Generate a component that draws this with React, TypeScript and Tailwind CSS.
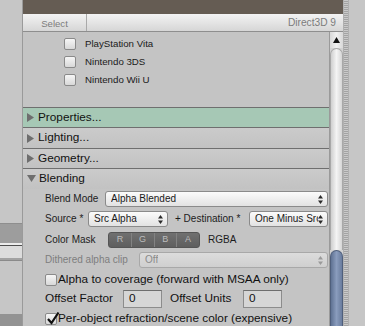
import React from "react";

const Arrows = ({ color = "#2a2a2a" }: { color?: string }) => (
  <svg width="5" height="9" viewBox="0 0 5 9" className="shrink-0">
    <polygon points="2.5,0 5,3.5 0,3.5" fill={color} />
    <polygon points="0,5.5 5,5.5 2.5,9" fill={color} />
  </svg>
);

const TriRight = () => (
  <svg width="8" height="9" viewBox="0 0 8 9" className="shrink-0">
    <polygon points="0,0 7,4.5 0,9" fill="#6e6e6e" />
  </svg>
);
const TriDown = () => (
  <svg width="9" height="8" viewBox="0 0 9 8" className="shrink-0">
    <polygon points="0,0 9,0 4.5,7" fill="#6e6e6e" />
  </svg>
);

const Box = ({ checked = false }: { checked?: boolean }) => (
  <div className="relative w-[12px] h-[12px] shrink-0 rounded-[2px] border border-[#8a8a8a] bg-gradient-to-b from-[#f6f6f6] to-[#d8d8d8]">
    {checked && (
      <svg width="14" height="14" viewBox="0 0 14 14" className="absolute left-[0px] top-[-3px]">
        <path d="M2 8 L5.5 12 L12.5 1.5" stroke="#111" strokeWidth="2.2" fill="none" />
      </svg>
    )}
  </div>
);

const Select = ({ text, className, disabled = false }: { text: string; className: string; disabled?: boolean }) => (
  <div
    className={
      "h-[16px] flex items-center justify-between pl-[5px] pr-[4px] rounded-[3px] border overflow-hidden " +
      (disabled
        ? "border-[#a8a8a8] bg-gradient-to-b from-[#dcdcdc] to-[#cfcfcf] text-[#8a8a8a] "
        : "border-[#8a8a8a] bg-gradient-to-b from-[#fbfbfb] to-[#e2e2e2] text-[#1a1a1a] ") +
      className
    }
  >
    <span className="text-[10px] leading-none whitespace-nowrap overflow-hidden">{text}</span>
    <Arrows color={disabled ? "#9a9a9a" : "#2a2a2a"} />
  </div>
);

const Foldout = ({ label, open = false, green = false, h }: { label: string; open?: boolean; green?: boolean; h: string }) => (
  <div
    className={
      "shrink-0 flex items-center pl-[4px] gap-[3px] border-t border-[#6f6f6f] " +
      h +
      (green ? " bg-[#a6c8b5]" : " bg-gradient-to-b from-[#cbcbcb] to-[#c2c2c2]")
    }
  >
    {open ? <TriDown /> : <TriRight />}
    <span className="text-[11.8px] leading-none text-[#111]">{label}</span>
  </div>
);

export default function App() {
  return (
    <div className="w-[365px] h-[326px] flex overflow-hidden bg-[#c5c5c5] font-['Liberation_Sans',sans-serif]">
      {/* left strip */}
      <div className="w-[23px] h-full shrink-0 flex flex-col border-r border-[#9a9a9a]">
        <div className="h-[223px] shrink-0 bg-[#c6c6c6]" />
        <div className="h-[20px] shrink-0 bg-[#9d9d9d] border-t border-[#8e8e8e]" />
        <div className="h-[2px] shrink-0 bg-[#ececec]" />
        <div className="h-[1px] shrink-0 bg-[#4e4e4e]" />
        <div className="h-[12px] shrink-0 bg-[#dcdcdc]" />
        <div className="h-[3px] shrink-0 bg-[#a2a2a2] border-b border-[#8a8a8a]" />
        <div className="h-[53px] shrink-0 bg-[#c6c6c6]" />
        <div className="flex-1 bg-[#939393]" />
      </div>

      {/* main panel */}
      <div className="w-[320px] h-full shrink-0 flex flex-col">
        <div className="h-[14px] shrink-0 bg-[#655c53]" />
        <div className="h-[18px] shrink-0 flex items-center border-b border-[#8e8e8e] bg-gradient-to-b from-[#f3f3f3] to-[#d6d6d6]">
          <div className="w-[64px] h-full flex items-center justify-center border-r border-[#a9a9a9] pt-[2px]">
            <span className="text-[9.6px] text-[#7c7c7c] leading-none">Select</span>
          </div>
          <div className="flex-1 flex justify-end pr-[7px] pt-[2px]">
            <span className="text-[10.2px] text-[#7c7c7c] leading-none">Direct3D 9</span>
          </div>
        </div>
        <div className="flex-1 flex min-h-0">
          {/* content */}
          <div className="w-[306px] flex flex-col bg-[#c4c4c4]">
            <div className="h-[75px] shrink-0 pt-[3px] flex flex-col">
              {["PlayStation Vita", "Nintendo 3DS", "Nintendo Wii U"].map((t) => (
                <div key={t} className="h-[18px] shrink-0 flex items-center pl-[41px] gap-[9px]">
                  <Box />
                  <span className="text-[9.7px] leading-none text-[#1a1a1a]">{t}</span>
                </div>
              ))}
            </div>
            <Foldout label="Properties..." green h="h-[20px]" />
            <Foldout label="Lighting..." h="h-[21px]" />
            <Foldout label="Geometry..." h="h-[20px]" />
            <Foldout label="Blending" open h="h-[21px]" />

            <div className="shrink-0 flex flex-col pl-[22px] pr-[1px] text-[10px] leading-none text-[#1c1c1c]">
              <div className="h-[20px] shrink-0 flex items-center">
                <span className="w-[60px]">Blend Mode</span>
                <Select text="Alpha Blended" className="flex-1" />
              </div>
              <div className="h-[20px] shrink-0 flex items-center">
                <span className="w-[43px]">Source *</span>
                <Select text="Src Alpha" className="w-[80px]" />
                <span className="ml-[7px] w-[74px]">+ Destination *</span>
                <Select text="One Minus Src Alpha" className="flex-1" />
              </div>
              <div className="h-[21px] shrink-0 flex items-center">
                <span className="w-[63px]">Color Mask</span>
                <div className="h-[16px] w-[92px] flex rounded-[3px] overflow-hidden border border-[#555] bg-gradient-to-b from-[#707070] to-[#5e5e5e]">
                  {["R", "G", "B", "A"].map((c, i) => (
                    <div
                      key={c}
                      className={
                        "flex-1 flex items-center justify-center text-[9px] text-[#bcbcbc] " +
                        (i > 0 ? "border-l border-[#828282]" : "")
                      }
                    >
                      {c}
                    </div>
                  ))}
                </div>
                <span className="ml-[8px]">RGBA</span>
              </div>
              <div className="h-[20px] shrink-0 flex items-center">
                <span className="w-[94px] text-[#7e7e7e]">Dithered alpha clip</span>
                <Select text="Off" className="flex-1" disabled />
              </div>
              <div className="h-[19px] shrink-0 flex items-center gap-[1px] text-[11.8px] text-[#111]">
                <Box />
                <span>Alpha to coverage (forward with MSAA only)</span>
              </div>
              <div className="h-[20px] shrink-0 flex items-center text-[11.8px] text-[#111]">
                <span className="w-[78px]">Offset Factor</span>
                <div className="w-[39px] h-[18px] flex items-center pl-[5px] border border-[#8c8c8c] border-t-[#6e6e6e] bg-[#d6d6d6]">0</div>
                <span className="ml-[8px] w-[73px]">Offset Units</span>
                <div className="w-[39px] h-[18px] flex items-center pl-[5px] border border-[#8c8c8c] border-t-[#6e6e6e] bg-[#d6d6d6]">0</div>
              </div>
              <div className="h-[19px] shrink-0 flex items-center gap-[1px] text-[11.8px] text-[#111]">
                <Box checked />
                <span>Per-object refraction/scene color (expensive)</span>
              </div>
            </div>
          </div>

          {/* scrollbar */}
          <div className="w-[14px] shrink-0 flex flex-col border-l border-[#9a9a9a] bg-[#d2d2d2]">
            <div className="h-[16px] shrink-0 flex items-center justify-center bg-gradient-to-r from-[#d8d8d8] via-[#f0f0f0] to-[#d8d8d8]">
              <svg width="7" height="6" viewBox="0 0 7 6">
                <polygon points="3.5,0 7,6 0,6" fill="#111" />
              </svg>
            </div>
            <div className="h-[202px] shrink-0 rounded-t-[7px] border border-b-0 border-[#a8a8a8] bg-gradient-to-r from-[#cfcfcf] via-[#f4f4f4] to-[#d6d6d6]" />
            <div className="flex-1 rounded-t-[7px] border border-b-0 border-[#4f5f7c] bg-gradient-to-r from-[#5f7293] via-[#8a9cbd] to-[#6a7d9e]" />
          </div>
        </div>
      </div>

      {/* striped strip */}
      <div className="w-[6px] h-full shrink-0 border-x border-[#b0b0b0] bg-[repeating-linear-gradient(to_bottom,#c9c9c9_0px,#c9c9c9_1px,#a3a3a3_1px,#a3a3a3_2px)]" />
      <div className="flex-1 h-full bg-[#c6c6c6]" />
    </div>
  );
}
